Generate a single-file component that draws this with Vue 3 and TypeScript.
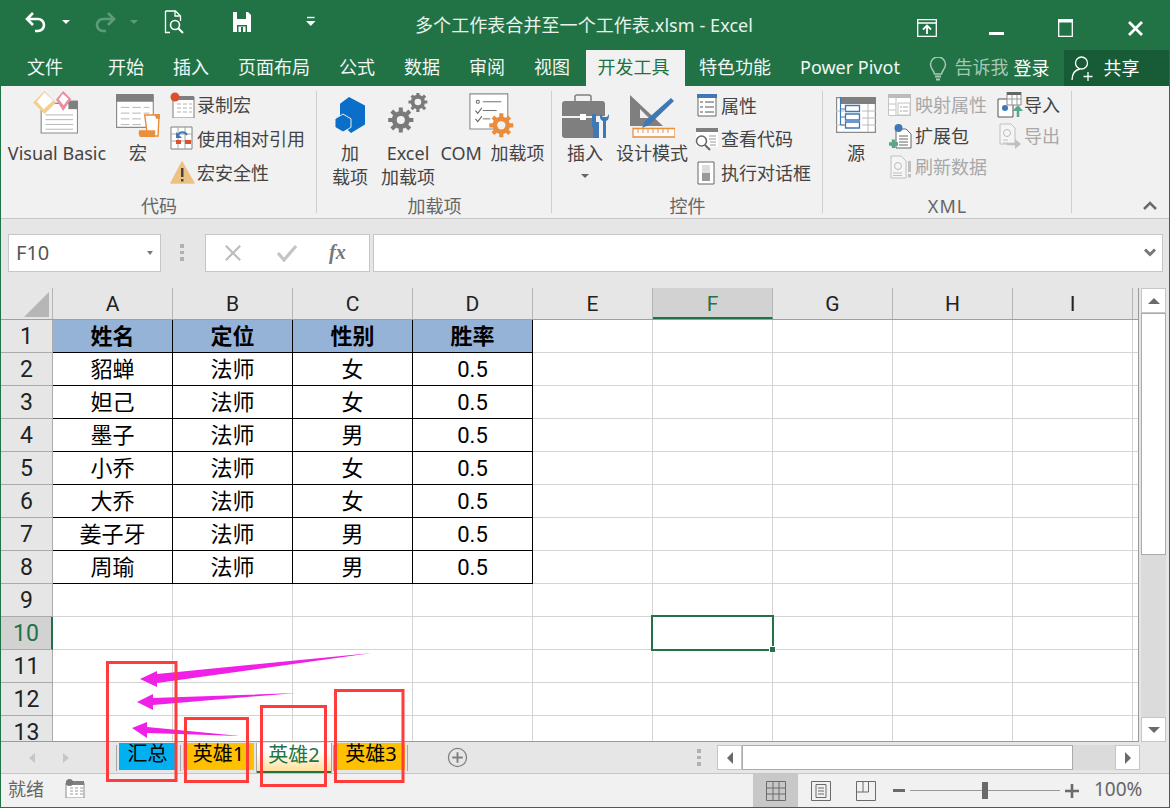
<script setup lang="ts">
const columns = ['A', 'B', 'C', 'D', 'E', 'F', 'G', 'H', 'I', '']
const table: string[][] = [
  ['姓名', '定位', '性别', '胜率'],
  ['貂蝉', '法师', '女', '0.5'],
  ['妲己', '法师', '女', '0.5'],
  ['墨子', '法师', '男', '0.5'],
  ['小乔', '法师', '女', '0.5'],
  ['大乔', '法师', '女', '0.5'],
  ['姜子牙', '法师', '男', '0.5'],
  ['周瑜', '法师', '男', '0.5'],
]
const rows = Array.from({ length: 13 }, (_, i) => i + 1)
const cellText = (r: number, c: number): string => table[r - 1]?.[c] ?? ''
const isBoxed = (r: number, c: number): boolean => r <= 8 && c < 4
const tabs = [
  { label: '文件', cls: 't-file' },
  { label: '开始', cls: '' },
  { label: '插入', cls: '' },
  { label: '页面布局', cls: '' },
  { label: '公式', cls: '' },
  { label: '数据', cls: '' },
  { label: '审阅', cls: '' },
  { label: '视图', cls: '' },
  { label: '开发工具', cls: 'active' },
  { label: '特色功能', cls: '' },
  { label: 'Power Pivot', cls: 't-pp' },
]
</script>

<template>
  <div class="window">
    <header class="titlebar">
      <div class="qat">
        <svg class="i-undo" width="24" height="22" viewBox="0 0 24 22"><path d="M9 2 3 8l6 6M3.500 8H14a6 6 0 0 1 0 12h-3" fill="none" stroke="#fff" stroke-width="2.600"/></svg>
        <span class="caret" />
        <svg class="i-redo" width="24" height="22" viewBox="0 0 24 22"><path d="M15 2l6 6-6 6M20.500 8H10a6 6 0 0 0 0 12h3" fill="none" stroke="#5f9b7b" stroke-width="2.600"/></svg>
        <span class="caret dim" />
        <svg class="i-prev" width="22" height="24" viewBox="0 0 22 24"><path d="M1.500 1h10l5 5v5M6 22.500H1.500V1M11 1v5h5.500" fill="none" stroke="#fff" stroke-width="1.300"/><circle cx="11" cy="15" r="4.500" fill="none" stroke="#fff" stroke-width="1.600"/><path d="m14 18 5 5" stroke="#fff" stroke-width="2"/></svg>
        <svg class="i-save" width="20" height="22" viewBox="0 0 20 22"><path d="M1 1h15l3 3v17H1z" fill="#fff"/><path d="M5 1h9v7H5z" fill="#217346"/><path d="M5 14h10v7H5z" fill="#217346"/><path d="M6.500 15.500h7V21h-7z" fill="#fff"/><path d="M9 16h2v5H9z" fill="#217346"/></svg>
        <svg class="i-cust" width="10" height="11" viewBox="0 0 10 11"><path d="M1 1.500h7.600" stroke="#fff" stroke-width="1.400"/><path d="M0 5h9.500L4.750 10z" fill="#fff"/></svg>
      </div>
      <div class="doc-title">多个工作表合并至一个工作表.xlsm - Excel</div>
      <div class="winctl">
        <svg width="20" height="18" viewBox="0 0 20 18"><path d="M.7.700h18.600v16.600H.7zM.7 4h18.600" fill="none" stroke="#fff" stroke-width="1.300"/><path d="M10 15V7m-4 3.500L10 6.500l4 4" fill="none" stroke="#fff" stroke-width="1.800"/></svg>
        <svg class="w-min" width="15" height="3" viewBox="0 0 15 3"><path d="M0 0h15v3H0z" fill="#fff"/></svg>
        <svg class="w-max" width="15" height="18" viewBox="0 0 15 18"><path d="M.7.700h13.600v16.600H.7z" fill="none" stroke="#fff" stroke-width="1.300"/><path d="M0 0h15v3.500H0z" fill="#fff"/></svg>
        <svg class="w-close" width="15" height="15" viewBox="0 0 15 15"><path d="m1 1 13 13M14 1 1 14" stroke="#fff" stroke-width="2.800"/></svg>
      </div>
    </header>

    <nav class="tabrow">
      <div v-for="t in tabs" :key="t.label" class="tab" :class="t.cls">{{ t.label }}</div>
      <svg class="bulb" width="18" height="25" viewBox="0 0 18 25"><path d="M5.500 17c0-3-4-5-4-9.500a7.500 7.500 0 0 1 15 0C16.500 12 12.500 14 12.500 17z" fill="none" stroke="#a6c7b4" stroke-width="1.500"/><path d="M6 19.500h6M7 22.500h4" stroke="#a6c7b4" stroke-width="2"/></svg>
      <span class="tell">告诉我</span>
      <span class="login">登录</span>
      <div class="share">
        <svg width="24" height="26" viewBox="0 0 24 26"><circle cx="10.500" cy="8" r="6" fill="none" stroke="#fff" stroke-width="1.300"/><path d="M1 25c0-6 3-10 8-11M17 17v9M12.500 21.500h9" fill="none" stroke="#fff" stroke-width="1.300"/></svg>
        <span>共享</span>
      </div>
    </nav>

    <section class="ribbon">
      <div class="group g1">
        <div class="gbody">
          <div class="big b-vb">
            <div class="ico">
              <svg width="45" height="43" viewBox="1 1 47 45"><path d="M9.500 14H47.500V45H9.500z" fill="#fff" stroke="#8a8a8a" stroke-width="1.200"/><path d="M38 11h10v9H38z" fill="#7f7f7f"/><path d="M14 26h29M14 31h29M14 36h29M14 41h29" stroke="#b3b3b3"/><path d="M13 1 25 13 13 25 1 13z" fill="#f3cf8d"/><path d="M13 2.500 22 11 12 20 5 12z" fill="#fff"/><path d="M32.500 1 41 9.500 32.500 22 25 10z" fill="#e98ea3"/><path d="M32 4 38 9l-5 7-5-6z" fill="#fff"/></svg>
            </div>
            <div class="lbl">Visual Basic</div>
          </div>
          <div class="big b-macro">
            <div class="ico">
              <svg width="46" height="43" viewBox="0 2 46 45"><path d="M.6 3H39V37H.6z" fill="#fff" stroke="#8a8a8a" stroke-width="1.200"/><path d="M0 2h39v8H0z" fill="#7f7f7f"/><path d="M5 16h9M17 16h9M29 16h6M5 22h9M17 22h9M29 22h6M5 28h9M17 28h9M5 34h9M17 34h9" stroke="#b3b3b3"/><path d="M30 24h15l-1 22H33z" fill="#fff" stroke="#e98f3d" stroke-width="1.500"/><path d="M40 23h6v5h-4zM24 40h17v7H25q-2-3-1-7z" fill="#e98f3d"/></svg>
            </div>
            <div class="lbl">宏</div>
          </div>
          <div class="smallcol sc1">
            <div class="small">
              <svg width="25" height="26" viewBox="0 0 25 26"><path d="M3 5h21v21H3z" fill="#fff" stroke="#7f7f7f"/><path d="M3 4h21v4H3z" fill="#7f7f7f"/><path d="M7 12h4M13 12h4M19 12h3M7 16h4M13 16h4M19 16h3M7 20h4M13 20h4M19 20h3" stroke="#b3b3b3"/><circle cx="5" cy="5" r="4.500" fill="#d9512f"/></svg>
              <span>录制宏</span>
            </div>
            <div class="small">
              <svg width="25" height="26" viewBox="0 0 25 26"><path d="M1 1h21v22H1z" fill="#fff" stroke="#7f7f7f"/><path d="M1 8h21M1 15h21M8 1v22M15 1v22" stroke="#a6a6a6"/><path d="M6 14h5v4H6zM15 14h6v4h-6z" fill="#d9512f"/><path d="M8 9a5 5 0 0 1 9 0" fill="none" stroke="#3f78b5" stroke-width="2"/><path d="M6 6v6h6z" fill="#3f78b5"/></svg>
              <span>使用相对引用</span>
            </div>
            <div class="small">
              <svg width="25" height="24" viewBox="0 0 25 24"><path d="M12 1 24 22H1z" fill="#ecc283" stroke="#ecc283" stroke-width="1.500" stroke-linejoin="round"/><path d="M11 7h2.500v9H11zM11 18h2.500v2.500H11z" fill="#444"/></svg>
              <span>宏安全性</span>
            </div>
          </div>
        </div>
        <div class="glabel">代码</div>
      </div>

      <div class="group g2">
        <div class="gbody">
          <div class="big b-add">
            <div class="ico">
              <svg width="32" height="36" viewBox="0 0 32 38" preserveAspectRatio="none"><path d="M15 0 31 9v20l-14 9-3-3v-9l-8-4V7z" fill="#0b6fc9"/><path d="M9 18l8 5v9l-8 5-8-5v-9z" fill="#0b6fc9" stroke="#f1f1f1" stroke-width="1"/></svg>
            </div>
            <div class="lbl">加<br />载项</div>
          </div>
          <div class="big b-excel">
            <div class="ico">
              <svg width="40" height="45" viewBox="0 0 44 50">
                <g fill="#7a7a7a"><circle cx="14" cy="30" r="10"/><circle cx="33" cy="10" r="8"/></g>
                <g stroke="#7a7a7a" stroke-width="4.500"><path d="M14 16v28M0 30h28M4 20l20 20M24 20 4 40"/><path d="M33 0v21M22.500 10h21M26 3l15 15M41 3 26 18" stroke-width="3.500"/></g>
                <circle cx="14" cy="30" r="4.500" fill="#f1f1f1"/><circle cx="33" cy="10" r="3.700" fill="#f1f1f1"/>
              </svg>
            </div>
            <div class="lbl">Excel<br />加载项</div>
          </div>
          <div class="big b-com">
            <div class="ico">
              <svg width="48" height="48" viewBox="0 0 52 52">
                <path d="M1 1h41v38H1z" fill="#fff" stroke="#8a8a8a" stroke-width="1.200"/>
                <path d="M8 8h3v3H8zM15 9.500h20M15 19h15M15 28h8" fill="none" stroke="#666"/>
                <path d="m7 19 2.500 3L14 16M7 28l2.500 3L14 25" fill="none" stroke="#666" stroke-width="1.200"/>
                <circle cx="35" cy="35" r="9.500" fill="#ea8c3c"/>
                <path d="M35 22v26M22 35h26M26 26l18 18M44 26 26 44" stroke="#ea8c3c" stroke-width="4.500"/>
                <circle cx="35" cy="35" r="4.500" fill="#f1f1f1"/>
              </svg>
            </div>
            <div class="lbl com">COM 加载项</div>
          </div>
        </div>
        <div class="glabel">加载项</div>
      </div>

      <div class="group g3">
        <div class="gbody">
          <div class="big b-ins">
            <div class="ico">
              <svg width="48" height="46" viewBox="0 0 48 46">
                <path d="M13 8V3q0-2 2-2h12q2 0 2 2v5" fill="none" stroke="#7f7f7f" stroke-width="1.500"/>
                <path d="M3 7h37q3 0 3 3v12H0V10q0-3 3-3zM0 24h30v5h6V44H3q-3 0-3-3z" fill="#7f7f7f"/>
                <path d="M18 20h6v6h-6z" fill="#fff"/>
                <path d="M30 20h4v8h3v5h-7zM31 33h6v11h-6z" fill="#3f78b5"/>
                <path d="M38 20c0 4 0 6 3 7v17h3V27c3-1 3-4 3-7l-2 3h-4z" fill="#3f78b5"/>
              </svg>
            </div>
            <div class="lbl">插入<span class="mini-caret" /></div>
          </div>
          <div class="big b-design">
            <div class="ico">
              <svg width="46" height="44" viewBox="0 0 46 44">
                <path d="M1 0 34 31 1 31zM11 23h9L11 14z" fill="#7f7f7f" fill-rule="evenodd"/>
                <path d="M42 3l3 3-25 24-7 3 3-7z" fill="#3f78b5"/>
                <path d="M4 33.500h42V42H4z" fill="#fff" stroke="#e98f3d" stroke-width="1.300"/>
                <path d="M9 34v4M14 34v4M19 34v4M24 34v4M29 34v4M34 34v4M39 34v4" stroke="#e98f3d"/>
              </svg>
            </div>
            <div class="lbl">设计模式</div>
          </div>
          <div class="smallcol sc3">
            <div class="small">
              <svg width="20" height="23" viewBox="0 0 20 23"><path d="M1 1h18v21H1z" fill="#fff" stroke="#666"/><path d="M0 0h20v4H0z" fill="#3f78b5"/><path d="M3 8h3M8 8h9M3 13h3M8 13h9M3 18h3M8 18h9" stroke="#555"/></svg>
              <span>属性</span>
            </div>
            <div class="small">
              <svg width="24" height="24" viewBox="0 0 24 24"><path d="M1 2h22v18H1z" fill="#fff"/><path d="M1 1h22v4H1z" fill="#7f7f7f"/><path d="M14 9h7M14 12h7M15 15h6M15 18h6" stroke="#999"/><circle cx="6.500" cy="14" r="5" fill="#fff" stroke="#666" stroke-width="1.500"/><path d="m10 18 5 5" stroke="#666" stroke-width="2"/></svg>
              <span>查看代码</span>
            </div>
            <div class="small">
              <svg width="20" height="24" viewBox="0 0 20 24"><path d="M1 1h16v22H1z" fill="#fff" stroke="#666"/><path d="M5 4h8v16H5z" fill="#ddd"/><path d="M5 12h8v8H5z" fill="#999"/></svg>
              <span>执行对话框</span>
            </div>
          </div>
        </div>
        <div class="glabel">控件</div>
      </div>

      <div class="group g4">
        <div class="gbody">
          <div class="big b-src">
            <div class="ico">
              <svg width="40" height="36" viewBox="0 0 40 36"><path d="M.6.6h38.800v34.800H.6z" fill="#fff" stroke="#8a8a8a" stroke-width="1.200"/><path d="M4 0h36v7H4z" fill="#7f7f7f"/><path d="M26 14h14M26 21h14M26 28h14M32 7v28M0 14h8M0 28h8" stroke="#bbb"/><path d="M4.500 0v28M4.500 12h5M4.500 20h5M4.500 28h5" stroke="#3f78b5" stroke-width="1.200" fill="none"/><path d="M9.500 8.500h14v6h-14zM9.500 17h14v6h-14zM9.500 25h14v6h-14z" fill="#fff" stroke="#3f78b5" stroke-width="1.300"/></svg>
            </div>
            <div class="lbl">源</div>
          </div>
          <div class="smallcol sc4a">
            <div class="small off">
              <svg width="23" height="22" viewBox="0 0 23 22"><path d="M.5.500h22v21H.5z" fill="#fff" stroke="#c4c4c4"/><path d="M0 0h23v4H0z" fill="#bbb"/><path d="M8 4v18M0 10h8M0 16h8M10 9h12v12H10z" fill="none" stroke="#c4c4c4"/><path d="M12 13h2M15 13h5M12 17h2M15 17h5" stroke="#aaa"/></svg>
              <span>映射属性</span>
            </div>
            <div class="small">
              <svg width="24" height="26" viewBox="0 0 24 26"><path d="M8 6h10l5 5v14H8z" fill="#fff" stroke="#666"/><path d="M11 13h9M11 16h9M11 19h9M11 22h9" stroke="#666"/><circle cx="10.500" cy="5" r="4" fill="#3f78b5"/><path d="M1 21h9v-0M5.500 16.500V25" stroke="#5aa587" stroke-width="3.500"/></svg>
              <span>扩展包</span>
            </div>
            <div class="small off">
              <svg width="24" height="24" viewBox="0 0 24 24"><path d="M3 1h10l5 5v17H3z" fill="#f5f5f5" stroke="#c0c0c0"/><circle cx="10" cy="11" r="3.500" fill="none" stroke="#bbb"/><path d="M5 18h9M5 20.500h9" stroke="#c0c0c0"/><path d="M20 6h3v11h-3zM20 19h3v3.500h-3z" fill="#c0c0c0"/></svg>
              <span>刷新数据</span>
            </div>
          </div>
          <div class="smallcol sc4b">
            <div class="small">
              <svg width="26" height="26" viewBox="0 0 26 26"><path d="M1 7h11l4 4v14H1z" fill="#fff" stroke="#555"/><path d="M10 0h14v13H10z" fill="#fff" stroke="#888"/><path d="M10 0h14v3H10z" fill="#666"/><path d="M15 3v10M20 3v10M10 7h14" stroke="#999"/><circle cx="8" cy="16" r="3" fill="#3f78b5"/><path d="M21 25v-8" stroke="#5aa587" stroke-width="2.500"/><path d="M15.500 19l5.500-6 5 6z" fill="#5aa587"/></svg>
              <span>导入</span>
            </div>
            <div class="small off">
              <svg width="26" height="26" viewBox="0 0 26 26"><path d="M3 1h11l4 4v16H3z" fill="#f5f5f5" stroke="#c0c0c0"/><circle cx="10" cy="10" r="3.500" fill="none" stroke="#bbb"/><path d="M6 17h5M6 20h5" stroke="#c0c0c0"/><path d="M10 21h10" stroke="#c0c0c0" stroke-width="2.500"/><path d="m18 16 6 5-6 5z" fill="#c0c0c0"/></svg>
              <span>导出</span>
            </div>
          </div>
        </div>
        <div class="glabel">XML</div>
      </div>

      <div class="collapse">
        <svg width="14" height="9" viewBox="0 0 14 9"><path d="m1 8 6-6 6 6" fill="none" stroke="#6a6a6a" stroke-width="2.500"/></svg>
      </div>
    </section>

    <section class="formulabar">
      <div class="namebox">
        <span>F10</span>
        <i class="tri-down" />
      </div>
      <div class="dots"><i /><i /><i /></div>
      <div class="fxbox">
        <svg width="18" height="18" viewBox="0 0 20 18"><path d="m2 1 16 16M18 1 2 17" stroke="#bdbdbd" stroke-width="2.400"/></svg>
        <svg width="20" height="18" viewBox="0 0 20 18"><path d="m1 9 6 7L19 2" fill="none" stroke="#c4c4c4" stroke-width="3.200"/></svg>
        <span class="fx">fx</span>
      </div>
      <div class="finput">
        <svg width="14" height="9" viewBox="0 0 14 9"><path d="m2 1.500 5 5 5-5" fill="none" stroke="#777" stroke-width="3"/></svg>
      </div>
    </section>

    <section class="sheetarea">
      <div class="sheet">
        <div class="colhead">
          <div class="corner"><svg width="26" height="25" viewBox="0 0 26 25"><path d="M25 0v25H0z" fill="#b6b6b6"/></svg></div>
          <div v-for="c in columns" :key="c" class="ch" :class="{ cur: c === 'F', sliver: c === '' }">{{ c }}</div>
        </div>
        <div class="gridbody">
          <div v-for="r in rows" :key="r" class="row">
            <div class="rh" :class="{ cur: r === 10 }">{{ r }}</div>
            <div
              v-for="(c, ci) in columns"
              :key="c"
              class="cell"
              :class="{ boxed: isBoxed(r, ci), head: r === 1 && ci < 4, sliver: c === '' }"
            >{{ cellText(r, ci) }}</div>
          </div>
          <div class="selection"><i /></div>
        </div>
      </div>
      <aside class="vscroll">
        <button class="sbtn"><i class="tri-up" /></button>
        <div class="vtrack"><div class="vthumb" /></div>
        <button class="sbtn"><i class="tri-dn" /></button>
      </aside>
    </section>

    <section class="sheettabs">
      <div class="navs"><i class="nl" /><i class="nr" /></div>
      <i class="tsep s0" />
      <div class="st blue">汇总</div>
      <i class="tsep" />
      <div class="st gold s1">英雄1</div>
      <div class="st cur">英雄2</div>
      <i class="tsep s2" />
      <div class="st gold s3">英雄3</div>
      <i class="tsep" />
      <svg class="plus" width="21" height="21" viewBox="0 0 22 22"><circle cx="11" cy="11" r="9.500" fill="none" stroke="#7f7f7f" stroke-width="1.300"/><path d="M11 5.500v11M5.500 11h11" stroke="#7f7f7f" stroke-width="2"/></svg>
      <div class="dots sm"><i /><i /><i /></div>
      <div class="hscroll">
        <button class="hbtn"><i class="tri-l" /></button>
        <div class="hthumb" />
        <div class="htrack" />
        <button class="hbtn"><i class="tri-r" /></button>
      </div>
    </section>

    <footer class="statusbar">
      <span class="ready">就绪</span>
      <svg class="recicon" width="20" height="19" viewBox="0 0 20 19"><path d="M1 4h18v15H1z" fill="#fff" stroke="#8a8a8a"/><path d="M1 2h18v4H1z" fill="#7f7f7f"/><path d="M5 9h3M10 9h3M15 9h3M5 12h3M10 12h3M15 12h3M5 15h3M10 15h3M15 15h3" stroke="#999"/><circle cx="4.500" cy="3.500" r="3.500" fill="#777"/></svg>
      <div class="views">
        <div class="view on"><svg width="20" height="20" viewBox="0 0 20 20"><path d="M.5.500h19v19H.5zM.5 7h19M.5 13h19M7 .5v19M13 .5v19" fill="none" stroke="#6a6a6a"/></svg></div>
        <div class="view"><svg width="20" height="20" viewBox="0 0 20 20"><path d="M.5.500h19v19H.5zM5 3.500h10v13H5zM7 7h6M7 10h6M7 13h6" fill="none" stroke="#6a6a6a"/></svg></div>
        <div class="view"><svg width="20" height="20" viewBox="0 0 20 20"><path d="M.5.500h19v19H.5zM.5 11h12V.5M7 .5V11" fill="none" stroke="#6a6a6a"/></svg></div>
      </div>
      <i class="zminus" />
      <div class="zslider"><i /></div>
      <svg class="zplus" width="14" height="14" viewBox="0 0 14 14"><path d="M7 0v14M0 7h14" stroke="#6a6a6a" stroke-width="2.600"/></svg>
      <span class="zoomval">100%</span>
    </footer>

    <svg class="annot" width="1170" height="808" viewBox="0 0 1170 808">
      <g fill="#f020e6">
        <path d="M372 653 157 674v-3l-17 8 17 8v-4z" />
        <path d="M296 693 153 698v-4l-16 8 16 8v-5z" />
        <path d="M240 736 147 727v-5l-15 6 15 10v-5z" />
      </g>
      <g fill="none" stroke="#ff3b3b" stroke-width="3">
        <rect x="107.500" y="662.500" width="68.500" height="118" />
        <rect x="185.500" y="718.500" width="62" height="63" />
        <rect x="261.500" y="706.500" width="64" height="79" />
        <rect x="335.500" y="690.500" width="67.500" height="91" />
      </g>
    </svg>
  </div>
</template>

<style>
html, body { margin: 0; padding: 0; background: #217346; }
</style>

<style scoped>
* { box-sizing: border-box; }
.window {
  position: relative;
  width: 1170px;
  height: 808px;
  padding: 0 1px 1px;
  background: #217346;
  overflow: hidden;
  display: flex;
  flex-direction: column;
  font: 18px/24px "Noto Sans", "Noto Sans CJK SC", sans-serif;
  color: #444;
}

.titlebar { height: 43px; flex: none; display: flex; align-items: center; color: #fff; position: relative; }
.qat { display: flex; align-items: center; padding-left: 23px; }
.caret { width: 0; height: 0; border: 4px solid transparent; border-top: 4px solid #fff; border-bottom: 0; margin-left: 14px; }
.caret.dim { border-top-color: #5f9b7b; margin-left: 13px; }
.i-redo { margin-left: 23px; }
.i-prev { margin-left: 26px; }
.i-save { margin-left: 46px; }
.i-cust { margin-left: 54px; }
.doc-title { margin-left: 99px; white-space: nowrap; color: #e9f2ec; line-height: 24px; margin-top: 6px; letter-spacing: .07px; }
.winctl { position: absolute; left: 916px; top: 19px; display: flex; align-items: flex-start; }
.w-min { margin: 13px 0 0 52px; }
.w-max { margin-left: 54px; }
.w-close { margin: 2px 0 0 55px; }

.tabrow { height: 43px; flex: none; display: flex; align-items: flex-end; color: #fff; }
.tab { height: 36px; line-height: 34px; padding: 0 14.500px; white-space: nowrap; color: #f2f7f4; }
.tab.t-file { margin-left: 11.500px; margin-right: 16px; }
.tab.active { background: #f1f1f1; color: #217346; padding: 0 15px 0 12px; margin-left: 1px; }
.bulb { margin: 0 7px 4px 15px; flex: none; }
.tell { height: 36px; line-height: 34px; color: #a6c7b4; width: 54px; overflow: hidden; white-space: nowrap; }
.login { height: 36px; line-height: 36px; margin-left: 5px; white-space: nowrap; }
.share { margin-left: 15px; height: 36px; flex: 1; background: #185c37; display: flex; align-items: center; padding-left: 7px; gap: 8px; }

.ribbon { height: 133px; flex: none; display: flex; background: #f1f1f1; border-bottom: 1px solid #c6c6c6; position: relative; }
.group { height: 132px; display: flex; flex-direction: column; position: relative; }
.group::after { content: ""; position: absolute; right: 0; top: 5px; bottom: 5px; width: 1px; background: #cfcfcf; }
.g1 { width: 316px; }
.g2 { width: 235px; }
.g3 { width: 271px; }
.g4 { width: 249px; }
.gbody { height: 107px; display: flex; }
.glabel { height: 25px; line-height: 26px; text-align: center; color: #666; }
.g4 .glabel { letter-spacing: 1px; }
.big { display: flex; flex-direction: column; align-items: center; flex: none; }
.ico { height: 55px; display: flex; align-items: flex-end; justify-content: center; flex: none; }
.lbl { text-align: center; white-space: nowrap; line-height: 24px; }
.lbl.com { word-spacing: 4px; }
.smallcol { display: flex; flex-direction: column; flex: none; }
.small { display: grid; align-items: center; justify-items: start; white-space: nowrap; }
.small.off { color: #a8a8a8; }

.b-vb { width: 100px; margin-left: 6px; }
.b-vb .ico { padding-bottom: 7px; padding-right: 4px; }
.b-macro { width: 46px; margin-left: 8px; }
.b-macro .ico { padding-bottom: 4px; }
.sc1 { margin-left: 9px; padding-top: 2px; }
.sc1 .small { height: 34px; grid-template-columns: 27px auto; }
.b-add { width: 44px; margin-left: 11px; }
.b-add .ico { padding-bottom: 8px; }
.b-excel { width: 58px; margin-left: 7px; }
.b-excel .ico { padding-bottom: 3px; }
.b-com { width: 107px; margin-left: 2px; }
.b-com .ico { padding-bottom: 0; }
.b-ins { width: 50px; margin-left: 8px; }
.b-ins .ico { padding-bottom: 1px; padding-left: 1px; }
.b-ins .lbl { display: flex; flex-direction: column; align-items: center; }
.mini-caret { width: 0; height: 0; margin-top: 9px; border: 4px solid transparent; border-top: 4px solid #666; border-bottom: 0; }
.b-design { width: 74px; margin-left: 5px; }
.b-design .ico { padding-bottom: 2px; }
.sc3 { margin-left: 4px; padding-top: 3px; }
.sc3 .small { height: 33.500px; grid-template-columns: 28px auto; }
.sc3 .small svg { justify-self: center; }
.b-src { width: 44px; margin-left: 11px; }
.b-src .ico { padding-bottom: 8px; }
.sc4a { margin-left: 10px; padding-top: 3px; }
.sc4a .small { height: 31px; grid-template-columns: 27px auto; }
.sc4b { margin-left: 10px; padding-top: 3px; }
.sc4b .small { height: 31px; grid-template-columns: 27px auto; }
.collapse { position: absolute; left: 1142px; top: 115px; display: flex; }

.formulabar { height: 69px; flex: none; background: #e6e6e6; display: flex; align-items: center; padding: 0 0 2px 7px; }
.namebox { width: 153px; height: 38px; background: #fff; border: 1px solid #c6c6c6; display: flex; align-items: center; justify-content: space-between; padding: 0 7px; font-size: 20px; color: #555; }
.tri-down { width: 0; height: 0; border: 3.500px solid transparent; border-top: 4px solid #777; border-bottom: 0; }
.dots { width: 4px; display: flex; flex-direction: column; gap: 3px; margin: 0 21px 0 19px; flex: none; }
.dots i { display: block; width: 4px; height: 3.500px; background: #b0b0b0; }
.fxbox { width: 165px; height: 38px; background: #fff; border: 1px solid #c6c6c6; display: flex; align-items: center; padding-left: 18px; gap: 35px; }
.fx { margin-left: -3px; font: italic 700 20px "Liberation Serif", serif; color: #777; }
.finput { width: 790px; height: 38px; margin-left: 3px; background: #fff; border: 1px solid #c6c6c6; display: flex; align-items: center; justify-content: flex-end; padding-right: 5px; }

.sheetarea { height: 454px; flex: none; display: flex; background: #e6e6e6; }
.sheet { width: 1138px; flex: none; border-right: 1px solid #9a9a9a; border-bottom: 1px solid #9a9a9a; background: #fff; font-family: Roboto, "Noto Sans CJK SC", sans-serif; overflow: hidden; color: #000; }
.colhead { height: 32px; display: flex; background: #e6e6e6; border-bottom: 1px solid #9f9f9f; }
.corner { width: 52px; flex: none; border-right: 1px solid #b5b5b5; padding: 4px 0 0 23px; }
.ch { width: 120px; flex: none; text-align: center; line-height: 32px; font-size: 21px; color: #222; border-right: 1px solid #b5b5b5; }
.ch.cur { background: #d2d2d2; color: #217346; border-bottom: 2px solid #217346; }
.ch.sliver, .cell.sliver { width: 5px; border-right: 0; }
.gridbody { position: relative; height: 421px; overflow: hidden; }
.row { display: flex; height: 33px; }
.rh { width: 52px; flex: none; background: #e6e6e6; border-right: 1px solid #ababab; border-bottom: 1px solid #ababab; text-align: center; line-height: 33px; font-size: 23px; color: #222; }
.rh.cur { background: #d2d2d2; color: #217346; border-right: 2px solid #217346; }
.cell { width: 120px; flex: none; border-right: 1px solid #d4d4d4; border-bottom: 1px solid #d4d4d4; text-align: center; line-height: 34px; font-size: 22px; white-space: nowrap; }
.cell.boxed { border-color: #000; }
.cell.head { background: #95b3d7; font-weight: 700; }
.selection { position: absolute; left: 650px; top: 295px; width: 123px; height: 36px; border: 2px solid #217346; }
.selection i { position: absolute; right: -4px; bottom: -4px; width: 7px; height: 7px; background: #217346; border: 1px solid #fff; }

.vscroll { flex: 1; display: flex; flex-direction: column; align-items: center; padding-right: 1px; }
.sbtn { width: 25px; height: 25px; flex: none; padding: 0; background: #fff; border: 1px solid #c6c6c6; display: flex; align-items: center; justify-content: center; }
.tri-up { width: 0; height: 0; border: 6px solid transparent; border-bottom: 6px solid #6a6a6a; border-top: 0; }
.tri-dn { width: 0; height: 0; border: 6px solid transparent; border-top: 6px solid #6a6a6a; border-bottom: 0; }
.vtrack { flex: 1; width: 25px; background: #dbdbdb; }
.vthumb { height: 242px; background: #fff; border: 1px solid #ababab; }

.sheettabs { height: 32px; flex: none; background: #e6e6e6; display: flex; align-items: center; font-family: "Noto Sans", "Noto Sans CJK SC", sans-serif; font-size: 20px; color: #000; border-bottom: 1px solid #c6c6c6; }
.navs { width: 115px; padding-left: 28px; display: flex; gap: 28px; flex: none; }
.nl { width: 0; height: 0; border: 5.500px solid transparent; border-right: 6px solid #c6c6c6; border-left: 0; }
.nr { width: 0; height: 0; border: 5.500px solid transparent; border-left: 6px solid #c6c6c6; border-right: 0; }
.tsep { width: 1px; height: 26px; background: #a6a6a6; flex: none; }
.tsep.s0 { margin-right: 2px; }
.st { height: 27px; margin-top: -3px; line-height: 22px; text-align: center; flex: none; white-space: nowrap; }
.st.blue { width: 57px; background: #00b0f0; margin-right: 4px; }
.st.gold.s1 { width: 71px; margin-left: 2px; background: #ffc000; }
.st.cur { width: 74px; margin-left: 3px; height: 30px; margin-top: 0; line-height: 24px; background: linear-gradient(#fff 30%, #ffdf9a); color: #217346; border-bottom: 2px solid #217346; box-shadow: 1px 0 0 #a6a6a6, -1px 0 0 #a6a6a6; }
.tsep.s2 { margin-left: 2px; }
.st.gold.s3 { width: 68px; margin-left: 3px; margin-right: 2px; background: #ffc000; }
.plus { margin-left: 39px; flex: none; }
.dots.sm { margin: 0 16px 0 229px; }
.hscroll { display: flex; height: 25px; }
.hbtn { width: 25px; height: 25px; padding: 0; background: #fff; border: 1px solid #c6c6c6; display: flex; align-items: center; justify-content: center; }
.tri-l { width: 0; height: 0; border: 6px solid transparent; border-right: 6px solid #6a6a6a; border-left: 0; }
.tri-r { width: 0; height: 0; border: 6px solid transparent; border-left: 6px solid #6a6a6a; border-right: 0; }
.hthumb { width: 331px; background: #fff; border: 1px solid #ababab; }
.htrack { width: 42px; background: #dbdbdb; }

.statusbar { height: 33px; flex: none; background: #f1f1f1; display: flex; align-items: center; color: #666; }
.ready { margin-left: 7px; padding-bottom: 4px; }
.recicon { margin: 0 0 4px 21px; }
.views { margin-left: 668px; height: 33px; display: flex; }
.view { width: 45px; height: 33px; display: flex; align-items: center; justify-content: center; }
.view.on { background: #c8c8c8; }
.zminus { width: 12px; height: 3px; background: #6a6a6a; margin-left: 5px; }
.zslider { position: relative; width: 150px; height: 1px; background: #999; margin-left: 5px; }
.zslider i { position: absolute; left: 72px; top: -8px; width: 6px; height: 17px; background: #6a6a6a; }
.zplus { margin-left: 5px; }
.zoomval { margin-left: 15px; padding-bottom: 4px; font-size: 19px; white-space: nowrap; }

.annot { position: absolute; left: 0; top: 0; pointer-events: none; }
</style>
